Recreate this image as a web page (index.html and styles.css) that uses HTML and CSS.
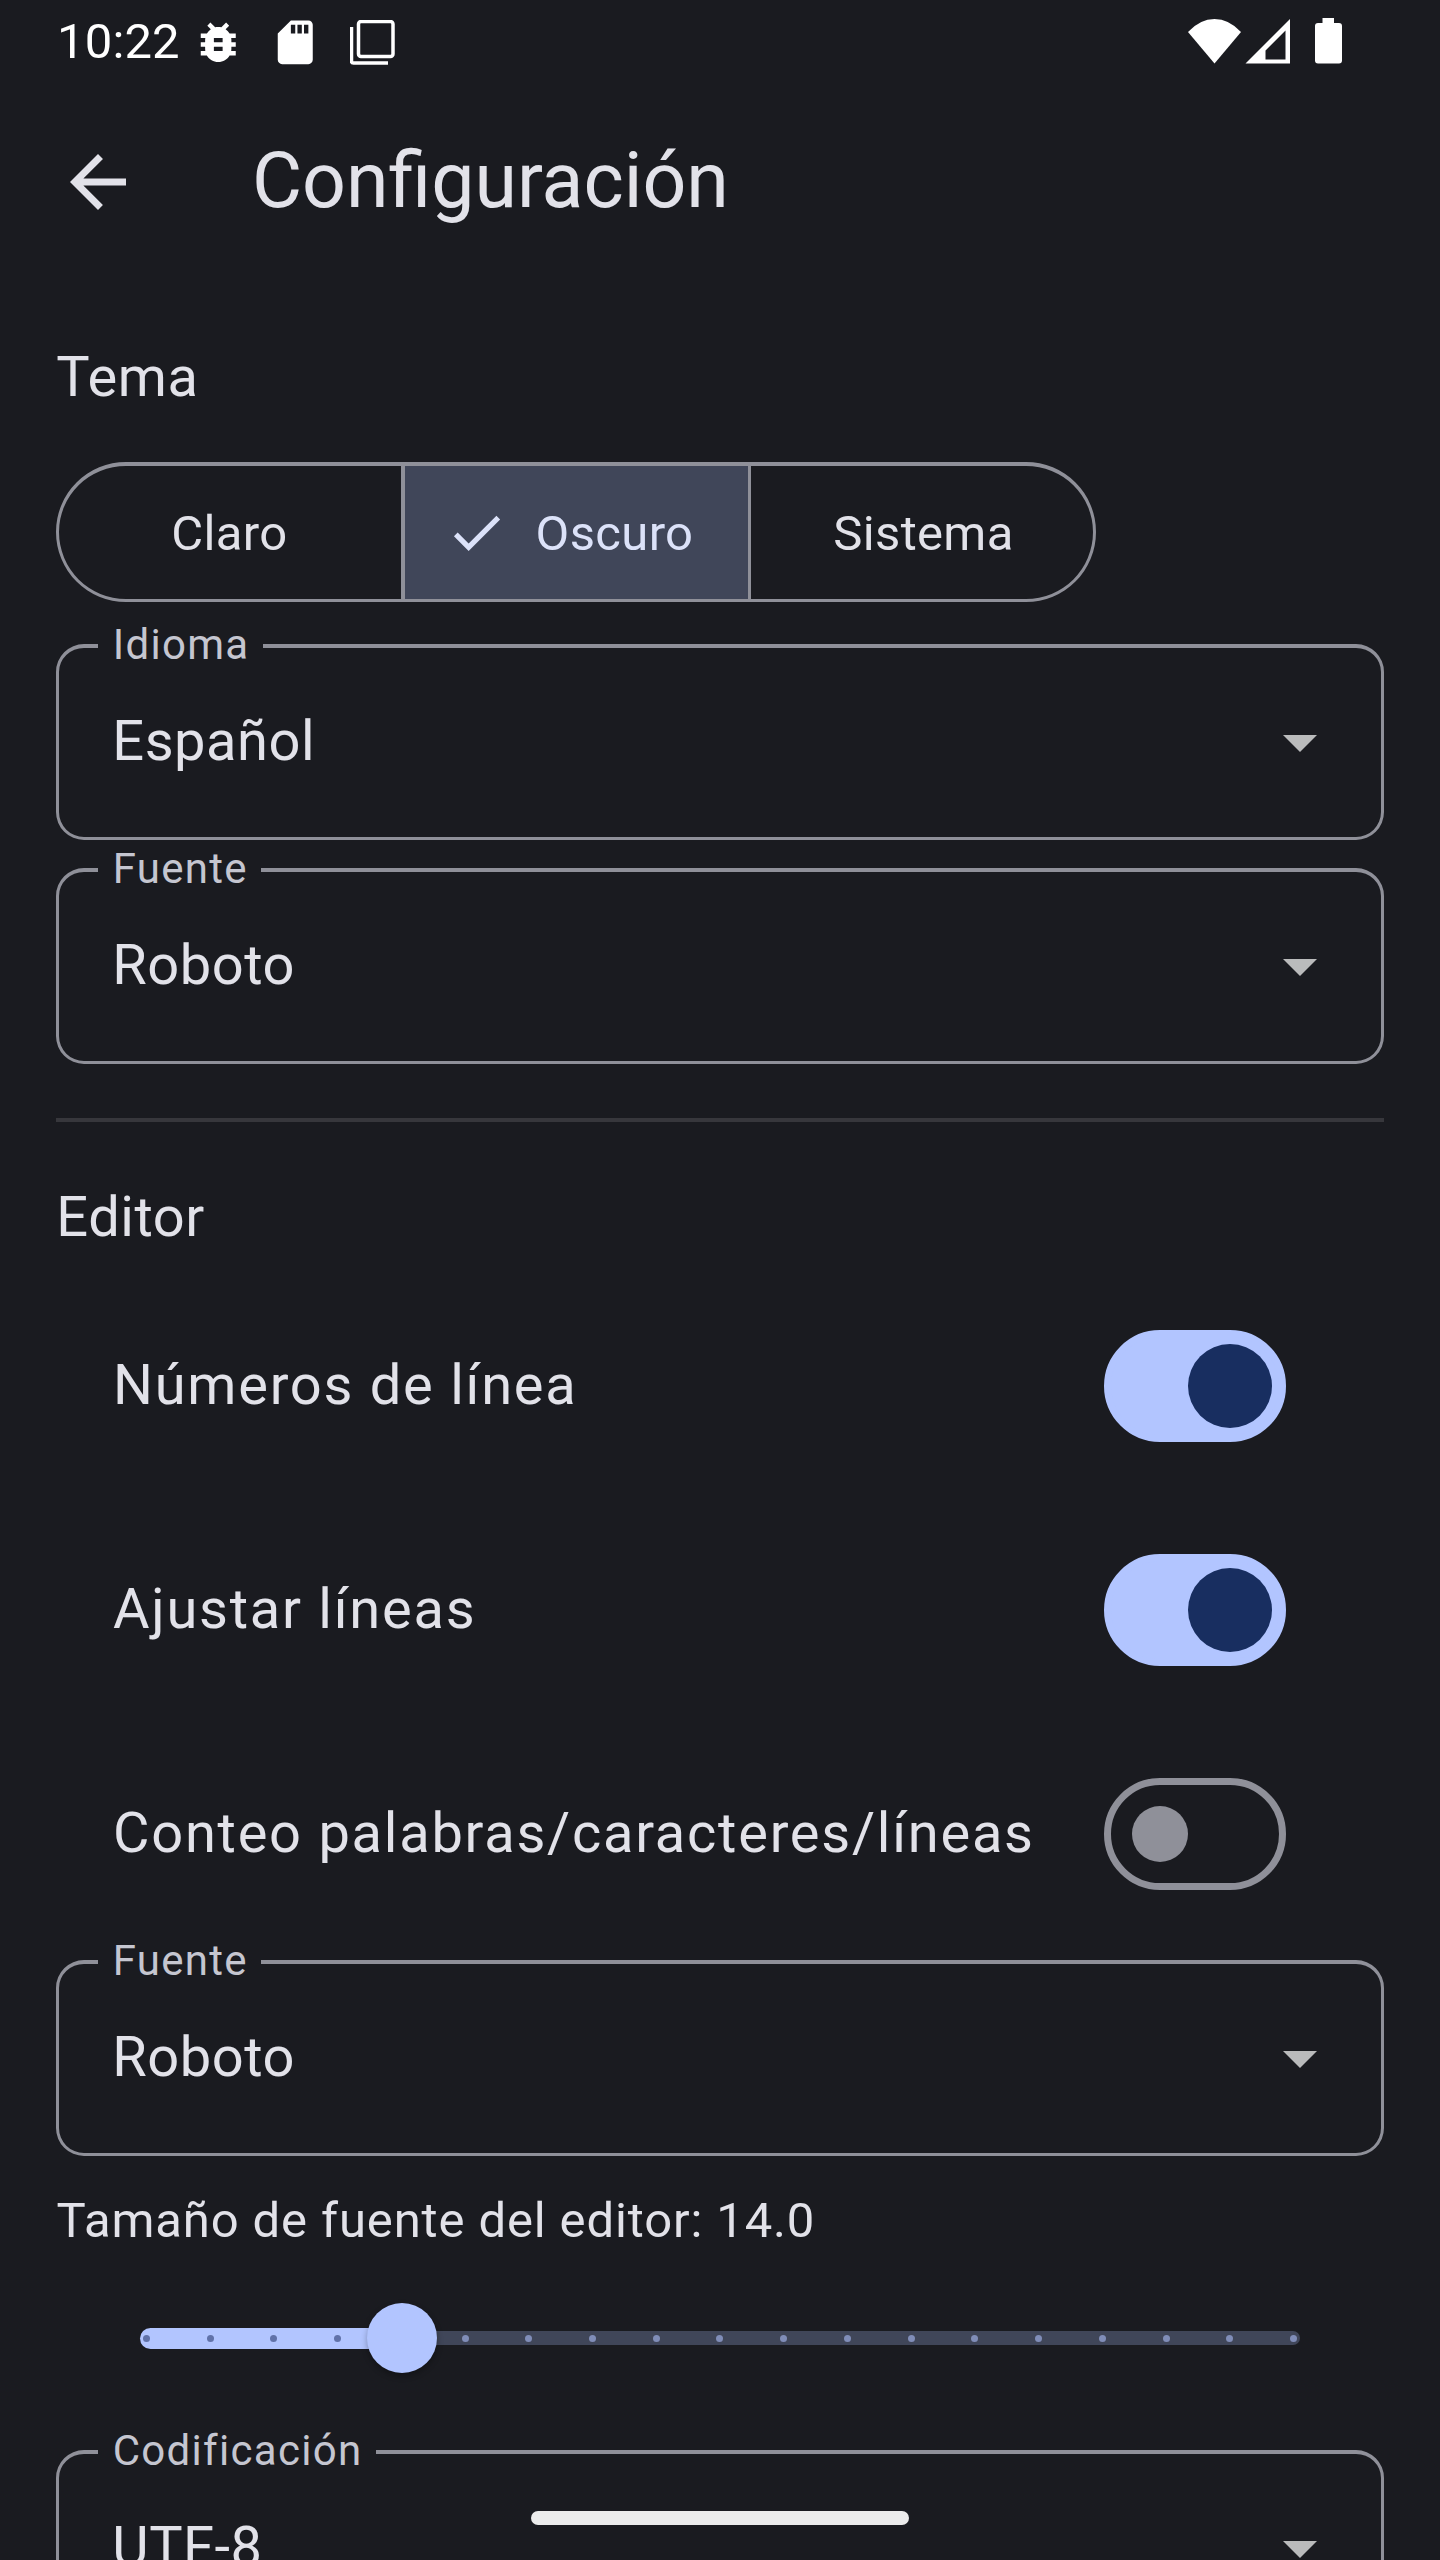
FILE: index.html
```html
<!DOCTYPE html>
<html lang="es">
<head>
<meta charset="utf-8">
<title>Configuración</title>
<link rel="stylesheet" href="styles.css">
</head>
<body>
<div class="screen">
  <header class="status">
    <span class="clock">10:22</span>
    <svg class="bug" viewBox="0 0 24 24"><path d="M20 8h-2.81c-.45-.78-1.07-1.45-1.82-1.96L17 4.41 15.59 3l-2.17 2.17C12.96 5.06 12.49 5 12 5c-.49 0-.96.06-1.41.17L8.41 3 7 4.41l1.62 1.63C7.88 6.55 7.26 7.22 6.81 8H4v2h2.09c-.05.33-.09.66-.09 1v1H4v2h2v1c0 .34.04.67.09 1H4v2h2.81c1.04 1.79 2.97 3 5.19 3s4.15-1.21 5.19-3H20v-2h-2.09c.05-.33.09-.66.09-1v-1h2v-2h-2v-1c0-.34-.04-.67-.09-1H20V8zm-6 8h-4v-2h4v2zm0-4h-4v-2h4v2z"/></svg>
    <svg class="sd" viewBox="0 0 24 24"><path d="M18 2h-8L4 8v12c0 1.100.9 2 2 2h12c1.100 0 2-.9 2-2V4c0-1.100-.9-2-2-2zm-6 6h-2V4h2v4zm3 0h-2V4h2v4zm3 0h-2V4h2v4z"/></svg>
    <svg class="copies" viewBox="0 0 46 46"><rect x="8.500" y="1.500" width="34.500" height="35" rx="2.500"/><path d="M1.500 7v34q0 2 2 2H38"/></svg>
    <svg class="radio" viewBox="0 0 158 48"><path d="M0 14Q12 1 26.500 1T53 14L26.500 45.500z"/><path fill-rule="evenodd" d="M102 1v44.500H57.500zM97.500 12.500L77.500 32.500v9h20z"/><path d="M134.500 0h11.500v5h5q3 0 3 3v34.500q0 3-3 3h-21q-3 0-3-3V8q0-3 3-3h4.500z"/></svg>
  </header>
  <div class="appbar">
    <svg class="back" viewBox="0 0 24 24"><path d="M20 11H7.830l5.590-5.590L12 4l-8 8 8 8 1.410-1.410L7.830 13H20v-2z"/></svg>
    <h1>Configuración</h1>
  </div>
  <main>
    <h2 class="theme-title">Tema</h2>
    <div class="segments">
      <div class="segment light">Claro</div>
      <div class="segment selected"><svg class="check" viewBox="0 0 24 24"><path d="M9 16.170L4.830 12l-1.420 1.410L9 19 21 7l-1.410-1.410z"/></svg><span>Oscuro</span></div>
      <div class="segment system">Sistema</div>
    </div>
    <fieldset><legend>Idioma</legend><div class="select"><span>Español</span><i class="arrow"></i></div></fieldset>
    <fieldset><legend>Fuente</legend><div class="select"><span>Roboto</span><i class="arrow"></i></div></fieldset>
    <hr>
    <h2 class="editor-title">Editor</h2>
    <div class="row"><span>Números de línea</span><div class="switch on"><i></i></div></div>
    <div class="row"><span>Ajustar líneas</span><div class="switch on"><i></i></div></div>
    <div class="row"><span>Conteo palabras/caracteres/líneas</span><div class="switch"><i></i></div></div>
    <fieldset class="editor-font"><legend>Fuente</legend><div class="select"><span>Roboto</span><i class="arrow"></i></div></fieldset>
    <p class="size-label">Tamaño de fuente del editor: 14.0</p>
    <div class="slider">
      <div class="active"></div><div class="inactive"></div>
      <div class="ticks"><i></i><i></i><i></i><i></i><i></i><i></i><i></i><i></i><i></i><i></i><i></i><i></i><i></i><i></i><i></i><i></i><i></i><i></i><i></i></div>
      <div class="thumb"></div>
    </div>
    <fieldset class="encoding"><legend>Codificación</legend><div class="select"><span>UTF-8</span><i class="arrow"></i></div></fieldset>
  </main>
  <div class="home"></div>
</div>
</body>
</html>
```
FILE: styles.css
```css
* { box-sizing: border-box; }
html, body { margin: 0; background: #1a1b20; }
.screen {
  position: relative;
  width: 1440px;
  height: 2560px;
  overflow: hidden;
  background: #1a1b20;
  color: #e2e2e9;
  font: 400 56px/84px Roboto, sans-serif;
}
svg { display: block; flex: none; }

/* status bar */
.status { display: flex; height: 84px; padding: 16px 94px 0 57px; color: #fff; fill: #fff; }
.clock { width: 135px; font-size: 49px; line-height: 51px; letter-spacing: .15px; }
.bug, .sd { width: 52.5px; height: 52.5px; }
.sd { margin-left: 24.500px; }
.copies { width: 46px; height: 46px; margin: 4px 0 0 28px; fill: none; stroke: #fff; stroke-width: 3.5; }
.radio { width: 158px; height: 48px; margin: 2px 0 0 auto; }

/* app bar */
.appbar { display: flex; align-items: center; height: 196px; padding-left: 56px; }
.back { width: 84px; height: 84px; fill: #e2e2e9; }
h1 { margin: 0 0 0 112px; padding-bottom: 2px; font-size: 77px; font-weight: 400; line-height: 98px; }

main { padding: 55px 56px 0; }
h2 { margin: 0; padding-left: .3px; font-size: 56px; font-weight: 400; line-height: 84px; letter-spacing: .525px; }
.theme-title { height: 127px; }

.segments {
  display: grid;
  grid-template-columns: 342px 350px 1fr;
  width: 1040px;
  height: 140px;
  border: 3px solid #8f9099;
  border-top-width: 4px;
  border-radius: 70px;
  overflow: hidden;
  font-size: 49px;
  letter-spacing: .35px;
}
.segment { display: flex; align-items: center; justify-content: center; padding-top: 2px; }
.segment.light { padding-right: 1px; }
.segment.system { padding-left: 3px; }
.segment.selected { gap: 28px; padding-right: 15px; background: #404659; color: #dce2f9; border: solid #8f9099; border-width: 0 3px 0 4px; }
.check { width: 63px; height: 63px; margin-top: -2px; fill: #dce2f9; }

fieldset {
  min-width: 0;
  height: 217px;
  margin: 21px 0 0;
  padding: 0 53px;
  border: 3px solid #8f9099;
  border-top-width: 4px;
  border-radius: 28px;
}
fieldset + fieldset { margin-top: 7px; }
legend { height: 46px; margin-left: -14px; padding: 0 13.3px 0 14.7px; color: #c5c6d0; font-size: 42px; line-height: 43px; letter-spacing: 1.310px; }
.select { display: flex; align-items: center; justify-content: space-between; height: 144px; padding-left: .3px; letter-spacing: .525px; }
.arrow { margin: 5px 11px 0 0; border: solid transparent; border-width: 17.500px 17.500px 0; border-top-color: #babbbc; }

hr { height: 4px; margin: 54px 0 53px; border: 0; background: #37373c; }
.editor-title { height: 84px; margin-bottom: 15px; }
.row { display: flex; align-items: center; justify-content: space-between; height: 224px; padding: 0 98px 0 57px; letter-spacing: 1.750px; }
.row span { padding-bottom: 2px; }
.switch { display: flex; align-items: center; width: 182px; height: 112px; padding-left: 21px; border: 7px solid #8f9099; border-radius: 56px; }
.switch i { width: 56px; height: 56px; border-radius: 50%; background: #8f9099; }
.switch.on { padding-left: 77px; border-color: #b2c5ff; background: #b2c5ff; }
.switch.on i { width: 84px; height: 84px; background: #182e60; }

.editor-font { margin-top: -7px; }
.size-label { height: 69px; margin: 29px 0 0; padding-left: .5px; font-size: 49px; line-height: 72px; letter-spacing: .875px; }

.slider { position: relative; display: flex; align-items: center; height: 168px; padding: 0 84px; }
.active { width: 262px; height: 21px; border-radius: 10.500px 0 0 10.500px; background: #b2c5ff; }
.inactive { flex: 1; height: 14px; border-radius: 0 7px 7px 0; background: #404659; }
.ticks { position: absolute; inset: 0 87px; display: flex; align-items: center; justify-content: space-between; }
.ticks i { width: 7px; height: 7px; border-radius: 50%; background: #808db8; }
.ticks i:nth-child(-n+4) { background: #6172a9; }
.thumb { position: absolute; left: 311px; top: 49px; width: 70px; height: 70px; border-radius: 50%; background: #b2c5ff; box-shadow: 0 3px 6px rgba(0, 0, 0, .3); }
.encoding { margin-top: 7px; }

/* gesture handle floats over the content */
.home { position: absolute; left: 531px; top: 2511px; width: 378px; height: 14px; border-radius: 7px; background: #ececec; }
```
